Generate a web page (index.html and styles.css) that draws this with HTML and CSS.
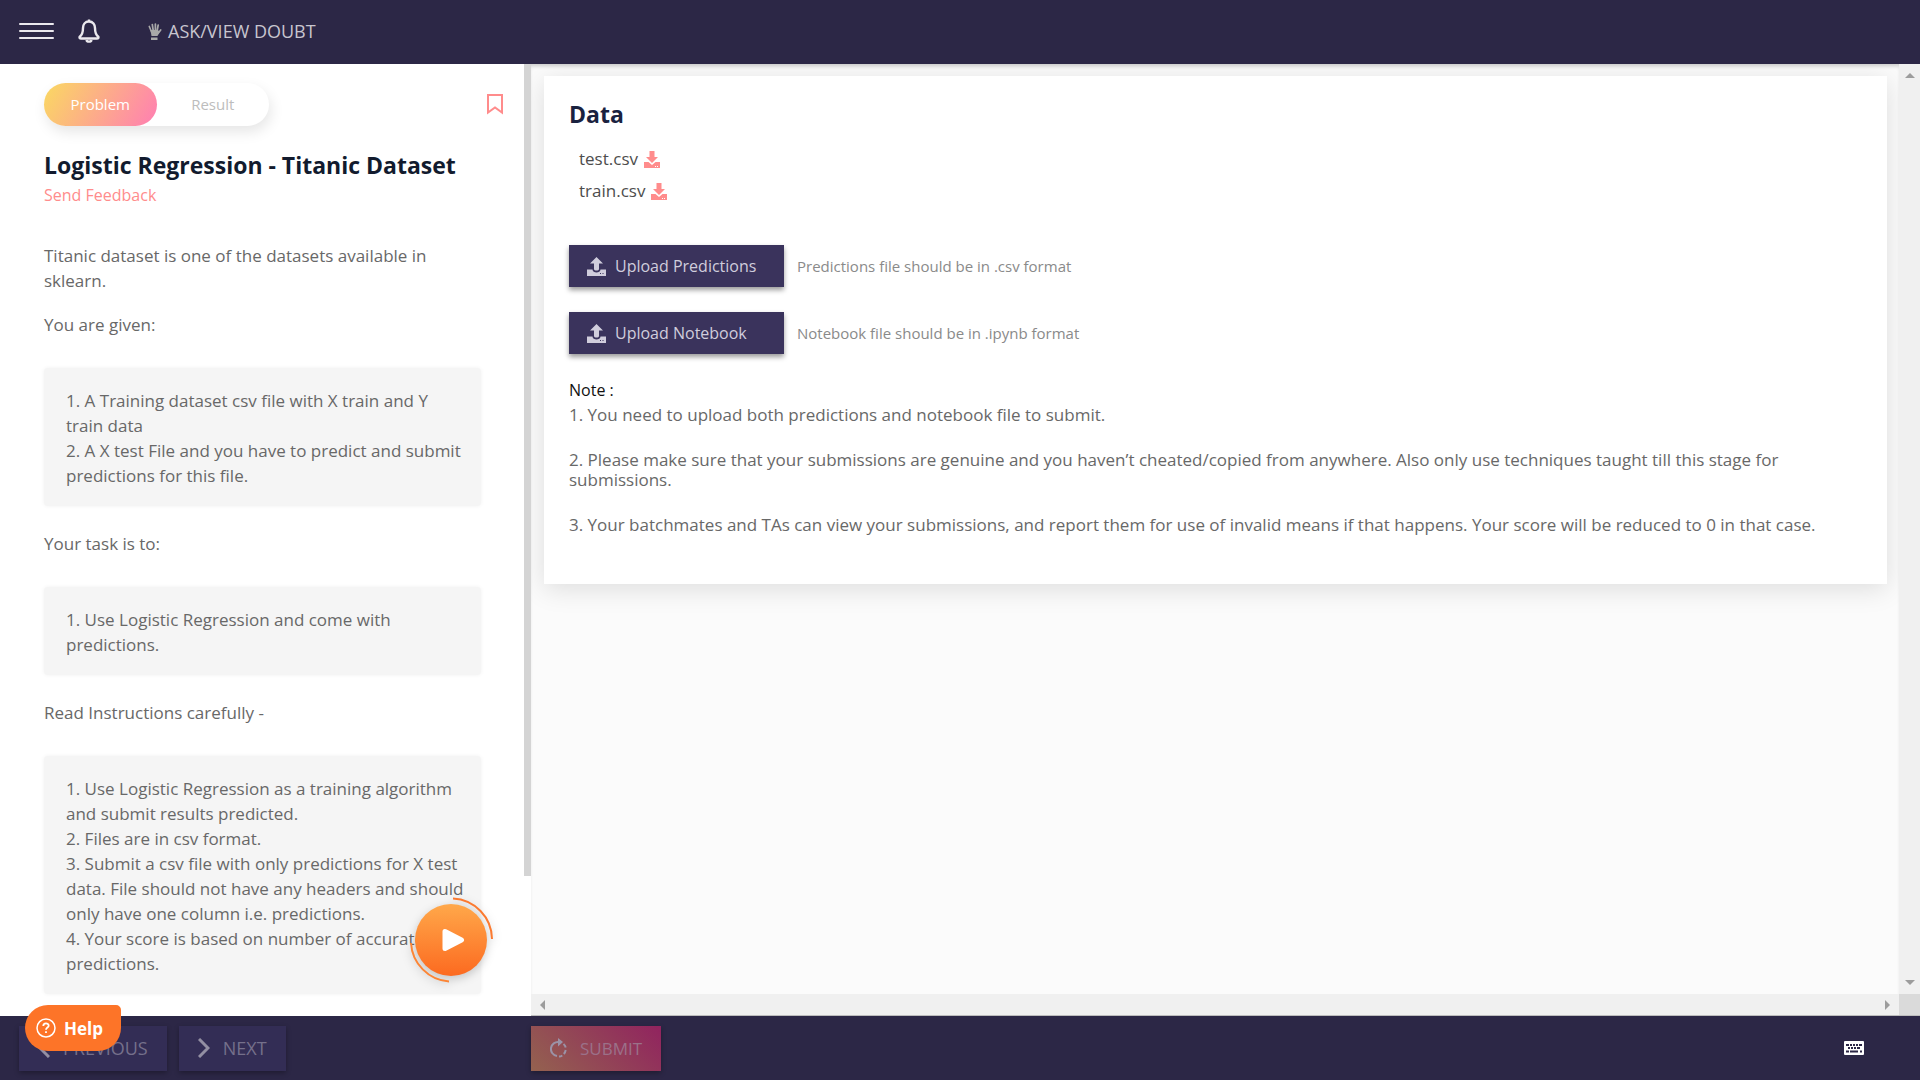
FILE: index.html
```html
<!DOCTYPE html>
<html lang="en">
<head>
<meta charset="utf-8">
<meta name="viewport" content="width=device-width, initial-scale=1">
<title>Logistic Regression - Titanic Dataset</title>
<link rel="stylesheet" href="styles.css">
</head>
<body class="page">
<header class="topbar">
  <button class="icon-btn menu-btn" type="button" aria-label="Menu"><span class="bar"></span><span class="bar"></span><span class="bar"></span></button>
  <button class="icon-btn" type="button" aria-label="Notifications">
    <svg width="22" height="24" viewBox="0 0 22 24" fill="none" stroke="#ebe9ee" stroke-width="2.400" stroke-linejoin="round"><path d="M11 2.500C7 2.500 5 5.500 5 9c0 5-1 7-3.300 8.700C1.200 19 2 19.500 3 19.500h16c1 0 1.800-.5 1.300-1.800C18 16 17 14 17 9c0-3.500-2-6.500-6-6.500z"/><path d="M11 .5v2M8.500 21c.5 2.200 4.500 2.200 5 0"/></svg>
  </button>
  <button class="icon-btn doubt-btn" type="button">
    <svg width="14" height="17" viewBox="0 0 14 17"><g stroke="#a9a9a9" stroke-width="1.700" stroke-linecap="round"><path d="M1.300 3.500L3.600 9M4.300 1.500L5.300 8M7.400 1v7M10.200 2L9 8.500M12.700 7L10 10.500"/></g><path fill="#a9a9a9" d="M2.500 7h7.500l1.500 2-2 4h-6zM3 14.500h6.500V17H3z"/></svg>
    <span>ASK/VIEW DOUBT</span>
  </button>
</header>

<main class="workspace">
  <section class="problem" tabindex="0">
    <div class="problem-head">
      <div class="tabs" role="tablist">
        <button class="tab tab-active" type="button" role="tab" aria-selected="true">Problem</button>
        <button class="tab" type="button" role="tab" aria-selected="false">Result</button>
      </div>
      <button class="icon-btn" type="button" aria-label="Bookmark">
        <svg width="16" height="22" viewBox="0 0 16 22" fill="none" stroke="#ff8c8c" stroke-width="2"><path d="M1 1h14v17.500l-7-5-7 5z"/></svg>
      </button>
    </div>
    <h1 class="title">Logistic Regression - Titanic Dataset</h1>
    <a class="feedback" href="#">Send Feedback</a>
    <div class="statement">
      <p>Titanic dataset is one of the datasets available in sklearn.</p>
      <p>You are given:</p>
      <div class="block">1. A Training dataset csv file with X train and Y train data<br>2. A X test File and you have to predict and submit predictions for this file.</div>
      <p>Your task is to:</p>
      <div class="block">1. Use Logistic Regression and come with predictions.</div>
      <p>Read Instructions carefully -</p>
      <div class="block">1. Use Logistic Regression as a training algorithm and submit results predicted.<br>2. Files are in csv format.<br>3. Submit a csv file with only predictions for X test data. File should not have any headers and should only have one column i.e. predictions.<br>4. Your score is based on number of accurate predictions.</div>
    </div>
    <div class="thumb"></div>
    <button class="play" type="button" aria-label="Play video">
      <svg width="110" height="110" viewBox="0 0 110 110" fill="none">
        <defs><linearGradient id="g" x1="0" y1="0" x2="0" y2="1"><stop offset="0" stop-color="#ffa84a"/><stop offset="1" stop-color="#fc6a20"/></linearGradient></defs>
        <path d="M57 13.500A41 41 0 0 1 96 54" stroke="#fb7a30" stroke-width="2"/>
        <path d="M15 58A41 41 0 0 0 53 96.500" stroke="#fc8535" stroke-width="2"/>
        <circle cx="55" cy="55" r="36" fill="url(#g)"/>
        <path d="M49 46.500v17L65.500 55z" fill="#fff" stroke="#fff" stroke-width="5" stroke-linejoin="round"/>
      </svg>
    </button>
  </section>

  <section class="submission">
    <div class="canvas">
      <article class="card">
        <h2 class="card-title">Data</h2>
        <ul class="files">
          <li><a class="file" href="#">test.csv <svg width="16" height="17" viewBox="0 0 16 17" fill="#ff8c8c"><path d="M5.500 0h5v6H14L8 12 2 6h3.500zM0 11h4.500L8 14l3.500-3H16v6H0z"/><path fill="#fff" d="M11 15h1v1h-1zM13 15h1v1h-1z"/></svg></a></li>
          <li><a class="file" href="#">train.csv <svg width="16" height="17" viewBox="0 0 16 17" fill="#ff8c8c"><path d="M5.500 0h5v6H14L8 12 2 6h3.500zM0 11h4.500L8 14l3.500-3H16v6H0z"/><path fill="#fff" d="M11 15h1v1h-1zM13 15h1v1h-1z"/></svg></a></li>
        </ul>
        <div class="uploads">
          <div class="upload-row">
            <button class="upload" type="button"><svg width="19" height="19" viewBox="0 0 19 19" fill="#d0cddc"><path d="M9.500 0L16 6.500h-4V12c0 2-5 2-5 0V6.500H3zM0 12.500h5.500c0 4 8 4 8 0H19V19H0z"/><path fill="#3a335c" d="M13 16h1v1h-1zM15.500 16h1v1h-1z"/></svg><span>Upload Predictions</span></button>
            <span class="hint">Predictions file should be in .csv format</span>
          </div>
          <div class="upload-row">
            <button class="upload" type="button"><svg width="19" height="19" viewBox="0 0 19 19" fill="#d0cddc"><path d="M9.500 0L16 6.500h-4V12c0 2-5 2-5 0V6.500H3zM0 12.500h5.500c0 4 8 4 8 0H19V19H0z"/><path fill="#3a335c" d="M13 16h1v1h-1zM15.500 16h1v1h-1z"/></svg><span>Upload Notebook</span></button>
            <span class="hint">Notebook file should be in .ipynb format</span>
          </div>
        </div>
        <div class="notes">
          <p class="note-title">Note :</p>
          <p>1. You need to upload both predictions and notebook file to submit.</p>
          <p>2. Please make sure that your submissions are genuine and you haven’t cheated/copied from anywhere. Also only use techniques taught till this stage for submissions.</p>
          <p>3. Your batchmates and TAs can view your submissions, and report them for use of invalid means if that happens. Your score will be reduced to 0 in that case.</p>
        </div>
      </article>
    </div>
    <div class="vbar"><svg width="10" height="5" viewBox="0 0 10 5"><path d="M0 5l5-5 5 5z"/></svg><svg width="10" height="5" viewBox="0 0 10 5"><path d="M0 0l5 5 5-5z"/></svg></div>
    <div class="hbar"><svg width="5" height="10" viewBox="0 0 5 10"><path d="M5 0L0 5l5 5z"/></svg><svg width="5" height="10" viewBox="0 0 5 10"><path d="M0 0l5 5-5 5z"/></svg></div>
    <div class="corner"></div>
  </section>
</main>

<footer class="bottombar">
  <div class="pager">
    <button class="nav-btn" type="button"><svg width="12" height="20" viewBox="0 0 12 20" fill="none" stroke="#938fa3" stroke-width="3"><path d="M11 1L2 10l9 9"/></svg><span>PREVIOUS</span></button>
    <button class="nav-btn" type="button"><svg width="12" height="20" viewBox="0 0 12 20" fill="none" stroke="#938fa3" stroke-width="3"><path d="M1 1l9 9-9 9"/></svg><span>NEXT</span></button>
  </div>
  <button class="submit" type="button"><svg width="17" height="20" viewBox="0 0 17 20" fill="none" stroke="#9b93a7" stroke-width="2"><path d="M9 4A7 7 0 0 0 7 18M9 18.500q1.800 0 3.300-1M13.800 16q1.500-1.500 1.900-4M15.700 9.500Q15.300 7.500 13.500 6"/><path fill="#9b93a7" stroke="none" d="M8 0l5 4-5 4.500z"/></svg><span>SUBMIT</span></button>
  <button class="icon-btn keyboard" type="button" aria-label="Keyboard shortcuts">
    <svg width="20" height="14" viewBox="0 0 20 14"><rect width="20" height="14" rx="1" fill="#fff"/><path stroke="#2c2746" stroke-width="2" d="M2 4h3M6 4h2M9 4h2M12 4h2M15 4h3M4 7h2M7 7h2M10 7h2M13 7h3M2 10.500h3M6 10.500h8M16 10.500h2"/></svg>
  </button>
  <button class="help" type="button"><svg width="20" height="20" viewBox="0 0 20 20" fill="none" stroke="#fff" stroke-width="1.500"><circle cx="10" cy="10" r="9"/><path stroke-width="1.800" d="M7.300 8c0-3.500 5.400-3.300 5.400-.3 0 1.800-2.700 2-2.700 4.100M10 13.200v1.900"/></svg><span>Help</span></button>
</footer>
</body>
</html>
```

FILE: styles.css
```css
*{box-sizing:border-box}
.page{margin:0;height:100vh;display:flex;flex-direction:column;overflow:hidden;font-family:"Open Sans","Noto Sans",sans-serif;font-size:17px;color:#686868;background:#fff}
button{font:inherit;border:0;margin:0;padding:0;cursor:pointer}
a{text-decoration:none}
p,h1,h2,ul{margin:0;padding:0}
svg{display:block;flex:none}
.icon-btn{background:none;display:flex;align-items:center}

.topbar{flex:none;height:64px;background:#2c2746;display:flex;align-items:center;padding:0 19px 2px;gap:24px}
.menu-btn{width:35px;flex-direction:column;gap:5px}
.bar{width:35px;height:2px;border-radius:1px;background:#ebe9ee}
.doubt-btn{margin-left:24px;gap:6px;font-size:18px;color:#c8c5cf}

.workspace{flex:1;min-height:0;display:flex}
.problem{flex:none;width:531px;position:relative;overflow:hidden;padding:19px 50px 0 44px;line-height:25px}
.problem-head{display:flex;justify-content:space-between;align-items:center;margin-right:-22px}
.tabs{display:flex;width:225px;height:43px;border-radius:22px;box-shadow:2px 6px 14px rgba(0,0,0,.1)}
.tab{flex:1;border-radius:22px;background:none;font-size:15px;color:#bdbdbd}
.tab-active{color:#fff;background:linear-gradient(120deg,#fad961,#ff7eb3)}
.title{margin-top:23px;font-size:23px;line-height:32px;font-weight:700;color:#121b2e;white-space:nowrap}
.feedback{display:block;width:max-content;font-size:16px;line-height:28px;color:#ff8c8c}
.statement{margin-top:34px}
.statement p+p{margin-top:19px}
.block{margin:31px 0 25px;padding:20px 16px 18px 22px;border-radius:4px;background:#f5f5f5;box-shadow:0 0 4px rgba(0,0,0,.06)}
.thumb{position:absolute;top:0;right:0;width:7px;height:812px;background:#d4d4d4}
.play{position:absolute;right:25px;bottom:21px;background:none;filter:drop-shadow(0 3px 5px rgba(0,0,0,.2))}

.submission{flex:1;min-width:0;display:grid;grid-template-columns:1fr 21px;grid-template-rows:1fr 22px}
.canvas{background:#fbfbfb;padding:12px 12px 0 13px;overflow:hidden;box-shadow:inset 0 4px 4px -2px rgba(0,0,0,.2)}
.card{background:#fff;padding:24px 25px;box-shadow:0 5px 25px rgba(0,0,0,.12)}
.card-title{font-size:23px;line-height:28px;color:#1a2240}
.files{list-style:none;padding:15px 10px 0}
.files li{height:32px}
.file{display:inline-flex;align-items:center;gap:6px;line-height:32px;color:#4d4d4d}
.uploads{display:flex;flex-direction:column;gap:25px;margin-top:38px}
.upload-row{display:flex;align-items:center;gap:13px}
.upload{width:215px;height:42px;display:flex;align-items:center;padding-left:18px;gap:9px;background:#3a335c;color:#d0cddc;font-size:16px;box-shadow:0 3px 5px rgba(0,0,0,.4)}
.hint{font-size:15px;color:#8a8a8a}
.notes{margin-top:26px;line-height:20px}
.notes p{margin-bottom:25px}
.notes .note-title{margin-bottom:5px;font-size:16px;color:#111}
.vbar,.hbar{display:flex;justify-content:space-between;align-items:center;background:#f0f0f0;fill:#9c9c9c}
.vbar{flex-direction:column;padding:9px 0}
.hbar{padding:0 9px;border-bottom:1px solid #bdbdbd}
.corner{background:#dadada;border-bottom:1px solid #bdbdbd}

.bottombar{flex:none;height:64px;position:relative;background:#2c2746;display:flex;align-items:center;padding:0 56px 0 19px}
.pager{width:512px;display:flex;gap:12px}
.nav-btn,.submit{height:45px;display:flex;align-items:center;font-size:17px;box-shadow:0 2px 5px rgba(0,0,0,.3)}
.nav-btn{gap:13px;padding:0 19px;font-size:18px;background:#332d55;color:#75708b}
.submit{gap:13px;padding:0 19px;background:linear-gradient(45deg,#94624f,#91235f);color:#9b7189}
.keyboard{margin-left:auto}
.help{position:absolute;left:25px;bottom:29px;height:46px;width:96px;padding-left:11px;display:flex;align-items:center;gap:8px;border-radius:23px 5px 23px 23px;background:#fd7428;color:#fff;font-weight:700}
```
